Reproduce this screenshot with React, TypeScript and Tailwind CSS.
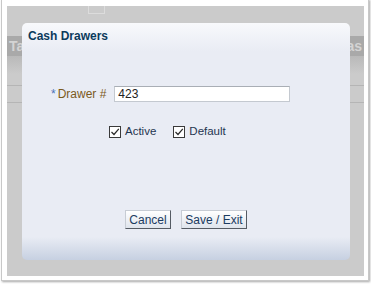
import React from 'react';

function CheckBox({ label }: { label: string }) {
  return (
    <label className="flex items-center gap-[4px] text-[11.5px] text-[#1f3550]">
      <span className="flex h-[12px] w-[12px] items-center justify-center border border-[#3a3a3a] bg-white">
        <svg width="10" height="10" viewBox="0 0 10 10">
          <path d="M1.5 5 L4 7.5 L8.8 1.8" fill="none" stroke="#2a2a2a" strokeWidth="1.2" />
        </svg>
      </span>
      {label}
    </label>
  );
}

function Button({ children, width }: { children: React.ReactNode; width: string }) {
  return (
    <button
      className={`h-[19px] ${width} border border-[#c7ccd4] border-r-[#555b63] border-b-[#555b63] bg-gradient-to-b from-[#ffffff] to-[#dfe4ec] text-[12px] leading-none text-[#1b3b61]`}
    >
      {children}
    </button>
  );
}

export default function App() {
  return (
    <div className="h-[284px] w-[371px] overflow-hidden bg-white pl-[1px]" style={{ fontFamily: '"Liberation Sans", Arial, sans-serif' }}>
      <div className="-mt-[1px] h-[282px] w-[368px] border border-[#c8c8c8] bg-white pt-[6px] pl-[5px] shadow-[1px_1px_2px_rgba(0,0,0,0.35)]">
        <div className="relative h-[270px] w-[357px] bg-[#cbcbcb]">
          {/* page behind the dialog */}
          <div className="flex h-[30px] items-start">
            <div className="ml-[81px] h-[8px] w-[17px] border border-t-0 border-[#dcdcdc]" />
          </div>
          <div className="flex h-[20px] items-center justify-between bg-[#a9a9a9] px-[2px] text-[14px] font-bold text-[#d4d4d4]">
            <span>Tax</span>
            <span>Cas</span>
          </div>
          <div className="h-[18px] bg-gradient-to-b from-[#b9b9b9] to-[#cbcbcb]" />
          <div className="mt-[11px] h-[1px] bg-[#b5b5b5]" />
          <div className="mt-[16px] h-[1px] bg-[#b5b5b5]" />

          {/* modal dialog */}
          <div className="absolute left-[15px] top-[17px] flex h-[237px] w-[328px] flex-col rounded-[5px] bg-[linear-gradient(to_bottom,#f8f9fc_0px,#e9ecf4_28px,#e9ecf4_214px,#c6d0e1_237px)]">
            <div className="pl-[6px] pt-[6px] text-[12px] font-bold leading-[14px] text-[#0b3a5c]">Cash Drawers</div>
            <div className="mt-[42px] flex items-center">
              <span className="ml-[29px] text-[12px] text-[#4a72b8]">*</span>
              <span className="ml-[2px] text-[12px] text-[#7b5a1c]">Drawer #</span>
              <input
                readOnly
                value="423"
                className="ml-[8px] h-[16px] w-[176px] border border-[#c4c9d0] border-t-[#a9aeb5] bg-white px-[3px] text-[12px] text-[#222] outline-none"
              />
            </div>
            <div className="ml-[87px] mt-[20px] flex items-center gap-[17px]">
              <CheckBox label="Active" />
              <CheckBox label="Default" />
            </div>
            <div className="mt-[70px] flex justify-center gap-[10px]">
              <Button width="w-[46px]">Cancel</Button>
              <Button width="w-[66px]">Save / Exit</Button>
            </div>
          </div>
        </div>
      </div>
    </div>
  );
}
